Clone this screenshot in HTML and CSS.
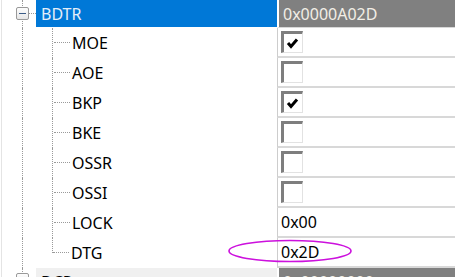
FILE: index.html
```html
<!DOCTYPE html>
<html lang="en">
<head>
    <meta charset="UTF-8">
    <title>BDTR</title>
    <link rel="stylesheet" href="styles.css">
</head>
<body>

    <!-- register tree -->
    <div class="grid">
        <div class="row head">
            <div class="name">
                <span class="node"><span class="toggle"></span></span>
                <span class="label sel">BDTR</span>
            </div>
            <div class="val reg">0x0000A02D</div>
        </div>

        <div class="row">
            <div class="name"><span class="rail"></span><span class="elbow"></span><span class="label">MOE</span></div>
            <div class="val"><span class="check"><svg width="16" height="16" viewBox="0 0 16 16"><polyline points="3,7 6,10.5 12,3.5" fill="none" stroke="#000" stroke-width="3"/></svg></span></div>
        </div>
        <div class="row">
            <div class="name"><span class="rail"></span><span class="elbow"></span><span class="label">AOE</span></div>
            <div class="val"><span class="check"></span></div>
        </div>
        <div class="row">
            <div class="name"><span class="rail"></span><span class="elbow"></span><span class="label">BKP</span></div>
            <div class="val"><span class="check"><svg width="16" height="16" viewBox="0 0 16 16"><polyline points="3,7 6,10.5 12,3.5" fill="none" stroke="#000" stroke-width="3"/></svg></span></div>
        </div>
        <div class="row">
            <div class="name"><span class="rail"></span><span class="elbow"></span><span class="label">BKE</span></div>
            <div class="val"><span class="check"></span></div>
        </div>
        <div class="row">
            <div class="name"><span class="rail"></span><span class="elbow"></span><span class="label">OSSR</span></div>
            <div class="val"><span class="check"></span></div>
        </div>
        <div class="row">
            <div class="name"><span class="rail"></span><span class="elbow"></span><span class="label">OSSI</span></div>
            <div class="val"><span class="check"></span></div>
        </div>
        <div class="row">
            <div class="name"><span class="rail"></span><span class="elbow"></span><span class="label">LOCK</span></div>
            <div class="val">0x00</div>
        </div>
        <div class="row">
            <div class="name"><span class="rail"></span><span class="elbow last"></span><span class="label">DTG</span></div>
            <div class="val">0x2D</div>
        </div>

        <div class="row head next">
            <div class="name">
                <span class="node"><span class="toggle plus"></span></span>
                <span class="label grp">DCR</span>
            </div>
            <div class="val reg">0x00000000</div>
        </div>
    </div>

    <!-- highlight ring -->
    <svg class="mark" width="130" height="26" viewBox="0 0 130 26">
        <ellipse cx="62" cy="13" rx="61" ry="10.5" fill="none" stroke="#cc11dd" stroke-width="1.6"/>
    </svg>

</body>
</html>
```

FILE: styles.css
```css
body { margin: 0; width: 455px; height: 277px; overflow: hidden; position: relative; background: #fff;
       font-family: 'Noto Sans', 'Open Sans', sans-serif; font-size: 16px; color: #000; }

.grid { margin-left: 1px; border-left: 1px solid #e4e4e4; }

.row { display: flex; height: 30px; }
.row.head { height: 28px; }

.name { width: 275px; flex: none; display: flex; }
.val { flex: 1; box-sizing: border-box; border-left: 1px solid #cdcdcd; border-bottom: 2px solid #d8d8d8;
       display: flex; align-items: center; padding-left: 3px; }
.val.reg { background: #808080; color: #f2eee6; border-left: 2px solid #fff; border-bottom: 1px solid #d8d8d8; padding-left: 4px; }

.label { display: flex; align-items: center; padding-left: 2px; }
.label.sel { flex: 1; background: #0078d7; color: #e4eef9; padding-left: 5px; height: 27px; }
.label.grp { flex: 1; background: #f0f0f0; padding-left: 5px; }

/* tree lines */
.node { width: 34px; flex: none; position: relative; }
.node::before { content: ''; position: absolute; left: 20px; top: 0; bottom: 0; border-left: 1px dotted #9a9a9a; }
.node::after { content: ''; position: absolute; left: 27px; right: 0; top: 13px; border-top: 1px dotted #9a9a9a; }
.toggle { position: absolute; left: 14px; top: 7px; width: 11px; height: 11px; z-index: 1;
          border: 1px solid #999; border-radius: 2px; background: linear-gradient(#fdfdfd, #e6e6e6); }
.toggle::before { content: ''; position: absolute; left: 2px; right: 2px; top: 5px; height: 1px; background: #3a5b86; }
.next .node::before { bottom: auto; height: 6px; }
.next .toggle { top: 5px; }

.rail { width: 29px; margin-left: 20px; border-left: 1px dotted #9a9a9a; }
.elbow { width: 17px; position: relative; border-left: 1px dotted #9a9a9a; }
.elbow::before { content: ''; position: absolute; left: 1px; right: 0; top: 14px; border-top: 1px dotted #9a9a9a; }
.elbow.last { border-left: none; }
.elbow.last::after { content: ''; position: absolute; left: 0; top: 0; height: 15px; border-left: 1px dotted #9a9a9a; }

/* checkbox */
.check { width: 22px; height: 22px; box-sizing: border-box; background: #fff;
         border-top: 3px solid #7e7e7e; border-left: 3px solid #7e7e7e;
         border-right: 1px solid #e2e2e2; border-bottom: 1px solid #e2e2e2; }
.check svg { display: block; margin: 2px 0 0 1px; }

.mark { position: absolute; left: 228px; top: 238px; }
```
